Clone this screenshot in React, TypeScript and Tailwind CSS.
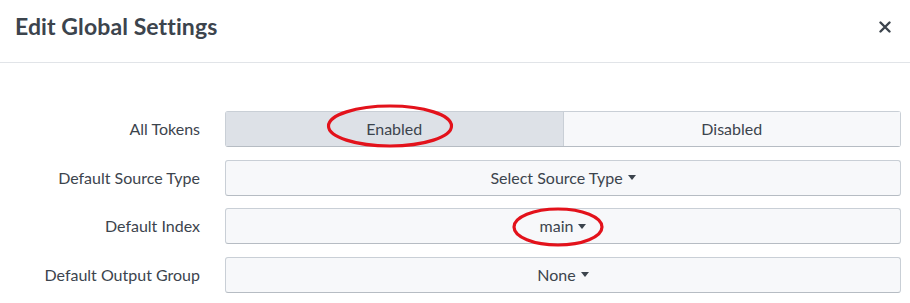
import React from "react";

const FONT = "font-['Lato','Open_Sans',sans-serif]";

function Caret() {
  return (
    <svg width="8" height="5" viewBox="0 0 8 5" className="ml-[5px] inline-block" aria-hidden>
      <path d="M0 0h8L4 5z" fill="#3c444d" />
    </svg>
  );
}

// red hand-drawn style annotation ring
function Ring({ w, h, dx = 0, dy = 0 }: { w: number; h: number; dx?: number; dy?: number }) {
  return (
    <svg
      width={w}
      height={h}
      viewBox={`0 0 ${w} ${h}`}
      className="pointer-events-none absolute left-1/2 top-1/2"
      style={{ transform: `translate(calc(-50% + ${dx}px), calc(-50% + ${dy}px))` }}
    >
      <ellipse cx={w / 2} cy={h / 2} rx={w / 2 - 2} ry={h / 2 - 2} fill="none" stroke="#e3121b" strokeWidth="3.2" />
    </svg>
  );
}

function Select({ label, ring }: { label: string; ring?: boolean }) {
  return (
    <button className="flex h-[36px] items-center justify-center rounded-[3px] border border-[#c9cfd6] border-b-[#b6bcc3] bg-[#f7f8fa] text-[16px] text-[#3c444d]">
      <span className="relative inline-flex items-center">
        {label}
        <Caret />
        {ring && <Ring w={92} h={40} dx={-5} dy={1} />}
      </span>
    </button>
  );
}

export default function App() {
  const rows = ["Default Source Type", "Default Index", "Default Output Group"];
  const values = ["Select Source Type", "main", "None"];

  return (
    <div className={`h-[303px] w-[910px] overflow-hidden bg-white ${FONT}`}>
      {/* Header */}
      <div className="flex h-[63px] items-center justify-between border-b border-[#e1e4e8] pl-[15px] pr-[19px]">
        <h2 className="mt-[-9px] text-[23px] font-bold tracking-[0.1px] text-[#3c444d]">Edit Global Settings</h2>
        <svg width="12" height="12" viewBox="0 0 12 12" className="mt-[-9px]" aria-label="Close">
          <path d="M1.5 1.5l9 9M10.5 1.5l-9 9" stroke="#3c444d" strokeWidth="2.4" strokeLinecap="round" />
        </svg>
      </div>

      {/* Body */}
      <div className="grid grid-cols-[200px_1fr] items-center gap-x-[25px] gap-y-[12.67px] pr-[9px] pt-[48px] text-[16px] text-[#3c444d]">
        <div className="text-right">All Tokens</div>
        <div className="flex h-[36px] rounded-[3px] border border-[#c9cfd6] border-b-[#b6bcc3]">
          <div className="flex flex-1 items-center justify-center border-r border-[#c9cfd6] bg-[#dde1e7]">
            <span className="relative">
              Enabled
              <Ring w={127} h={44} dx={-4} dy={-3} />
            </span>
          </div>
          <div className="flex flex-1 items-center justify-center bg-[#f7f8fa]">Disabled</div>
        </div>

        {rows.map((r, i) => (
          <React.Fragment key={r}>
            <div className="text-right">{r}</div>
            <Select label={values[i]} ring={i === 1} />
          </React.Fragment>
        ))}
      </div>
    </div>
  );
}
